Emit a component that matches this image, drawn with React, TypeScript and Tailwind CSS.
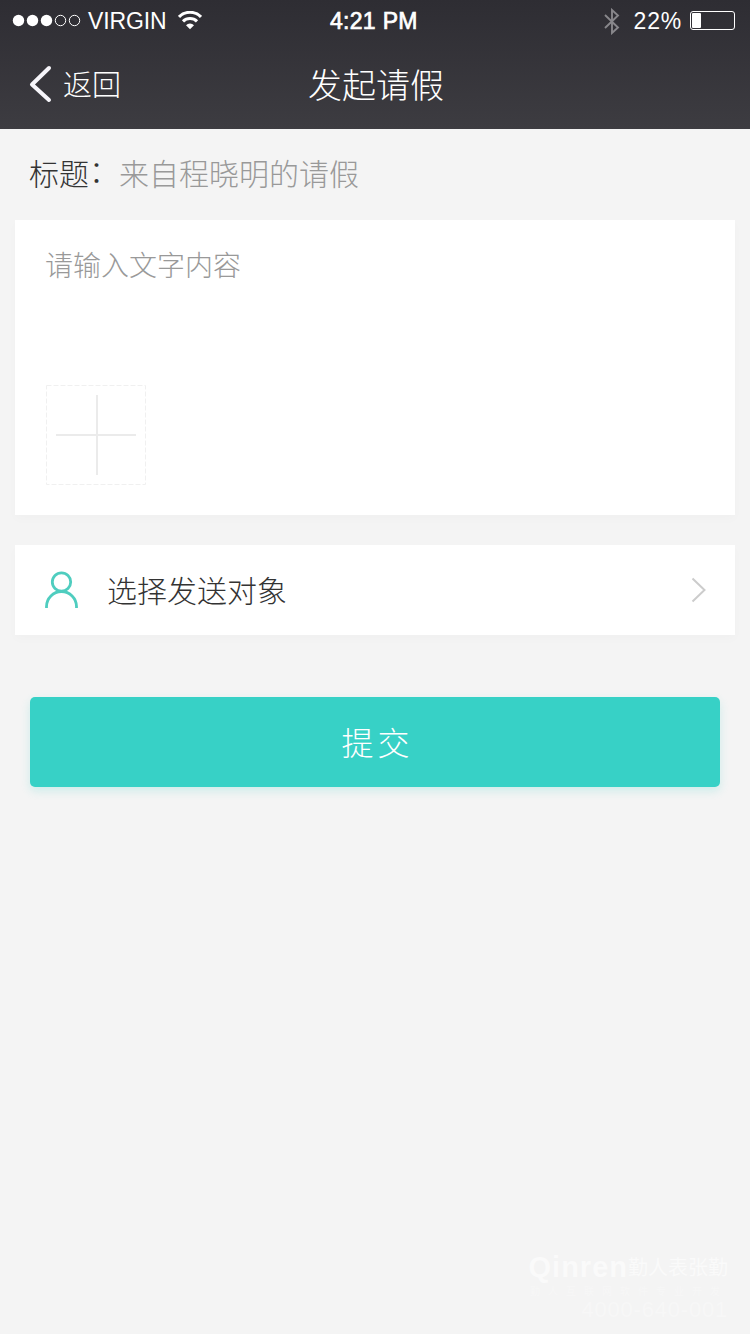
const titleLabel = "标题";
const titleValue = "来自程晓明的请假";

function StatusBar() {
  return (
    <div className="relative flex h-10 items-center pt-[2px] font-['Liberation_Sans',sans-serif] text-[23px] leading-none">
      <svg className="ml-3 shrink-0" width="70" height="14" viewBox="0 0 70 14" fill="white">
        <circle cx="6.5" cy="6.5" r="5.7" />
        <circle cx="20.5" cy="6.5" r="5.7" />
        <circle cx="34.5" cy="6.5" r="5.7" />
        <circle cx="48.5" cy="6.5" r="5.2" fill="none" stroke="white" />
        <circle cx="62.5" cy="6.5" r="5.2" fill="none" stroke="white" />
      </svg>
      <span className="ml-[6px] w-[90px] tracking-[-0.1px]">VIRGIN</span>
      <svg className="mb-[2px] shrink-0" width="24" height="19" viewBox="0 0 24 19" fill="none" stroke="white" strokeWidth="3.1">
        <path d="M1 5.9a15.5 15.5 0 0 1 22 0" />
        <path d="M5 10.4a10 10 0 0 1 14 0" />
        <path d="M8 14.2a5.8 5.8 0 0 1 8 0L12 18.2Z" fill="white" stroke="none" />
      </svg>
      <span className="ml-[128px] text-[23px] tracking-[0.3px] whitespace-nowrap [-webkit-text-stroke:0.7px_white]">4:21 PM</span>
      <div className="ml-auto flex items-center pr-[15px]">
        <svg className="mr-[13px]" width="17" height="27" viewBox="0 0 17 27" fill="none" stroke="#88878b" strokeWidth="1.9">
          <path d="M1 7 14 19.5 8 25V2l6 5.5L1 20" />
        </svg>
        <span className="mr-[8px] tracking-[0.8px]">22%</span>
        <div className="mb-[2px] h-[19px] w-[45px] rounded-[3px] border border-white p-[1px]">
          <div className="h-full w-[9px] rounded-[1px] bg-white" />
        </div>
      </div>
    </div>
  );
}

function Header() {
  return (
    <header className="h-[129px] bg-linear-to-b from-[#2e2d33] to-[#3d3c41] text-white">
      <StatusBar />
      <div className="grid h-[87px] grid-cols-[1fr_auto_1fr] items-center">
        <button className="flex items-center pl-[29px] text-[29px] leading-none font-light">
          <svg width="23" height="38" viewBox="0 0 23 38" fill="none" stroke="#f6f5fa" strokeWidth="4" strokeLinecap="round" strokeLinejoin="round">
            <path d="M20 3 3 19.5 20 35" />
          </svg>
          <span className="ml-[11px]">返回</span>
        </button>
        <h1 className="pl-[2px] text-[34px] leading-none font-light">发起请假</h1>
      </div>
    </header>
  );
}

function Watermark() {
  return (
    <div className="mt-auto flex flex-col items-end pr-[22px] pb-[12px] leading-none whitespace-nowrap text-[#fafafa]">
      <div className="flex items-center">
        <span className="font-['Liberation_Sans',sans-serif] text-[29px] leading-[30px] font-bold tracking-[1px]">Qinren</span>
        <span className="text-[20px]">勤人表张勤</span>
      </div>
      <div className="mt-px text-[10px] leading-[15px] tracking-[8px] text-[#f7f7f7]">勤人互联网软件专业开发</div>
      <div className="font-['Liberation_Sans',sans-serif] text-[22px] leading-[24px] tracking-[0.8px] text-[#f7f7f7]">4000-640-001</div>
    </div>
  );
}

export default function App() {
  return (
    <div className="flex h-[1334px] w-[750px] flex-col bg-[#f4f4f4] font-['Noto_Sans_CJK_SC',sans-serif] text-[#333]">
      <Header />
      <div className="flex h-[91px] items-center pb-[6px] pl-[29px] text-[30px] leading-none font-light">
        <span>{titleLabel}</span>
        <span className="w-[30px] pb-[5px]">：</span>
        <span className="text-[#999]">{titleValue}</span>
      </div>
      <main className="flex flex-col px-[15px]">
        <section className="flex h-[295px] flex-col justify-between bg-white px-[30px] pt-[29px] pb-[30px] shadow-[0_4px_10px_rgba(0,0,0,0.02)]">
          <p className="text-[28px] leading-[30px] font-light text-[#999]">请输入文字内容</p>
          <button className="ml-px size-[100px]">
            <svg width="100" height="100" viewBox="0 0 100 100" fill="none" stroke="#ebebeb">
              <rect x="0.5" y="0.5" width="99" height="99" strokeDasharray="5 2" stroke="#f0f0f0" />
              <path d="M10 50h80M51 10v80" strokeWidth="2" />
            </svg>
          </button>
        </section>
        <button className="mt-[30px] flex h-[90px] items-center bg-white pr-[29px] pl-[29px] text-left shadow-[0_4px_10px_rgba(0,0,0,0.02)]">
          <svg width="35" height="38" viewBox="0 0 35 38" fill="none" stroke="#4fcdbf" strokeWidth="2.8">
            <circle cx="17.5" cy="11" r="9.2" />
            <path d="M2.5 37v-1.5a15 15 0 0 1 30 0V37" />
          </svg>
          <span className="ml-[28px] pb-[3px] text-[30px] leading-none font-light">选择发送对象</span>
          <svg className="ml-auto" width="15" height="26" viewBox="0 0 15 26" fill="none" stroke="#ccc" strokeWidth="2">
            <path d="M1.5 1.5 13.5 13 1.5 24.5" />
          </svg>
        </button>
        <button className="mx-[15px] mt-[62px] h-[90px] rounded-[5px] bg-[#37d1c6] pb-[2px] pl-[5px] text-[32px] leading-none font-light tracking-[4px] text-white shadow-[0_4px_10px_rgba(55,209,198,0.2)]">
          提交
        </button>
      </main>
      <Watermark />
    </div>
  );
}
